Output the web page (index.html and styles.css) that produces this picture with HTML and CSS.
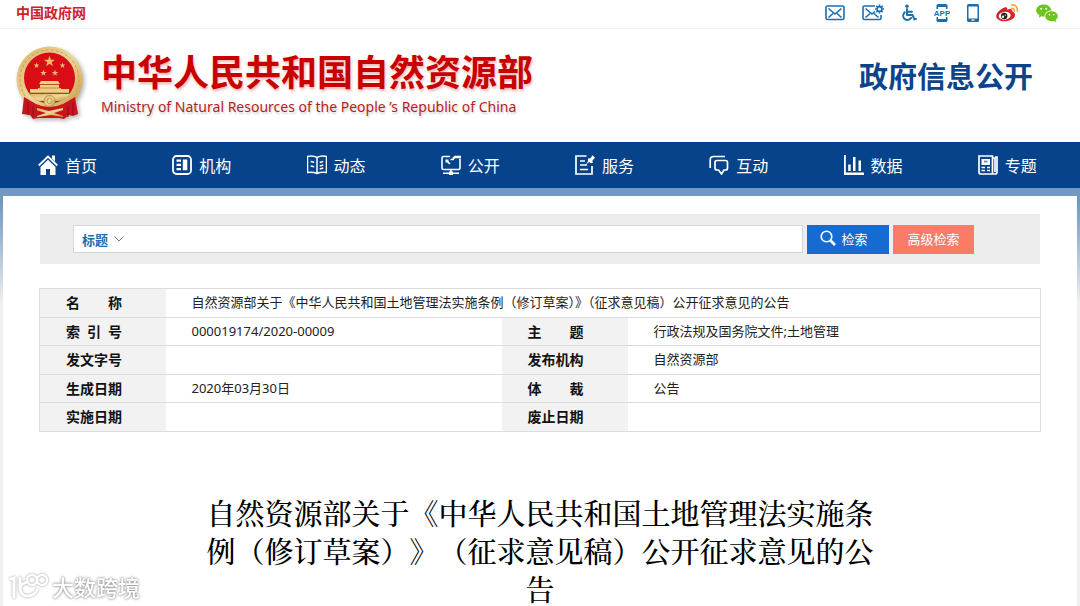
FILE: index.html
```html
<!DOCTYPE html>
<html lang="zh-CN">
<head>
<meta charset="utf-8">
<meta name="viewport" content="width=device-width, initial-scale=1">
<title>自然资源部 政府信息公开</title>
<link rel="stylesheet" href="styles.css">
</head>
<body>
<div class="topbar">
  <a class="gov-link" href="#">中国政府网</a>
  <nav class="tools" aria-label="快捷工具">
    <a class="tool" href="#" aria-label="邮箱"><svg width="20" height="18" viewBox="0 0 20 18" fill="none" stroke="#1b6fae" stroke-width="1.6"><rect x="1" y="2" width="18" height="13.5" rx="1.5"/><path d="M3.5 4.5 10 10l6.500-5.500M3.500 13.500 8 9.500M16.500 13.500 12 9.500"/></svg></a>
    <a class="tool" href="#" aria-label="邮件订阅"><svg width="22" height="18" viewBox="0 0 22 18" fill="none" stroke="#1b6fae" stroke-width="1.600"><path d="M13 2H2.500Q1 2 1 3.500V14q0 1.500 1.500 1.500h15Q19 15.500 19 14v-3"/><path d="M3.500 4.500 10 10l3-2.500M3.500 13.500 8 9.500M16.500 13.500 12 9.500"/><circle cx="17.500" cy="5" r="2.400"/><path d="M17.500.5v1.700M17.500 7.800v1.700M13 5h1.700M20.300 5H22M14.300 1.800l1.200 1.200M19.500 7l1.200 1.200M20.700 1.800 19.500 3M15.500 7l-1.200 1.200"/></svg></a>
    <a class="tool" href="#" aria-label="无障碍浏览"><svg width="16" height="18" viewBox="0 0 16 18" fill="none" stroke="#1b6fae" stroke-width="1.900" stroke-linecap="round" stroke-linejoin="round"><circle cx="6" cy="2.200" r="1.700" fill="#1b6fae" stroke="none"/><path d="M6 5v6h5.500l2 4.500 1.500-.7M6 7.800h5M3.800 8.300a4.300 4.300 0 1 0 6.400 5.500"/></svg></a>
    <a class="tool" href="#" aria-label="APP"><svg width="16" height="18" viewBox="0 0 16 18"><path fill="#1b6fae" d="M4 0h8q1.500 0 1.500 1.500V5h-1.600V3H4.100v2H2.500V1.500Q2.500 0 4 0ZM2.500 13h1.600v2h7.800v-2h1.600v3.500q0 1.500-1.500 1.500H4q-1.500 0-1.500-1.500Z"/><text class="app-text" x="8" y="12" text-anchor="middle">APP</text></svg></a>
    <a class="tool" href="#" aria-label="手机版"><svg width="12" height="18" viewBox="0 0 12 18"><path fill="#1b6fae" fill-rule="evenodd" d="M1.500 0h9Q12 0 12 1.500v15q0 1.500-1.500 1.500h-9Q0 18 0 16.500v-15Q0 0 1.500 0ZM1.500 2.500v12h9v-12ZM4.500 15.500v1.200h3v-1.200Z"/></svg></a>
    <a class="tool" href="#" aria-label="微博"><svg width="23" height="18" viewBox="0 0 23 18"><path fill="#d9222b" d="M8.500 3.500c2-.7 3.200.2 2.700 2.200 3.200-1.300 5.800-.7 5 1.900 5 1.700 3.300 8.300-4.700 9.400C5.300 17.900.2 15.700.2 11.900.2 9 4.700 4.700 8.500 3.500Z"/><ellipse cx="8.700" cy="11.800" rx="6" ry="3.900" fill="#fff" transform="rotate(-7 8.700 11.800)"/><circle cx="8.200" cy="12" r="3.200" fill="#222"/><circle cx="7" cy="12.800" r="1.200" fill="#fff"/><circle cx="9.300" cy="11.200" r=".6" fill="#fff"/><path fill="none" stroke="#f2a23a" stroke-width="1.600" stroke-linecap="round" d="M15.500 1q6-.8 6 6.500M15.500 4.300q3-.2 2.800 2.900"/></svg></a>
    <a class="tool" href="#" aria-label="微信"><svg width="22" height="18" viewBox="0 0 22 18"><path fill="#6cc41f" d="M7.700.5c4.300 0 7.400 2.700 7.700 6-4 0-7 2.500-6.800 6-1.100.1-2 0-3.200-.3L2.700 13.700l.7-2.500C1.200 9.800.2 8.300.2 6.600.2 3.200 3.500.5 7.700.5Z"/><path fill="#6cc41f" d="M15.500 7.300c3.500 0 6.300 2.200 6.300 5 0 1.500-.8 2.800-2.200 3.800l.6 1.900-2.300-1.100c-.8.2-1.500.3-2.400.3-3.500 0-6.200-2.200-6.200-4.900 0-2.800 2.700-5 6.200-5Z"/><g fill="#fff"><circle cx="5.200" cy="4.800" r="1"/><circle cx="10.200" cy="4.800" r="1"/><circle cx="13.500" cy="10.800" r=".8"/><circle cx="17.700" cy="10.800" r=".8"/></g></svg></a>
  </nav>
</div>

<header class="masthead">
  <svg class="emblem" width="68" height="76" viewBox="0 0 68 76" role="img" aria-label="国徽">
    <defs>
      <linearGradient id="gold" x1="0" y1="0" x2="1" y2="1"><stop offset="0" stop-color="#d9b566"/><stop offset=".5" stop-color="#edd698"/><stop offset="1" stop-color="#c8963f"/></linearGradient>
      <polygon id="star" points="0,-10 2.300,-3.100 9.500,-3.100 3.700,1.200 5.900,8.100 0,3.800 -5.900,8.100 -3.700,1.200 -9.500,-3.100 -2.300,-3.100"/>
    </defs>
    <circle cx="33.500" cy="33.500" r="33" fill="url(#gold)"/>
    <circle cx="33.500" cy="33.500" r="29.500" fill="none" stroke="#c9a050" stroke-width="1" stroke-dasharray="3 2"/>
    <path fill="#c8151d" d="M8 51 20 58q13 6 27 0l12-7 3 17-5 2-4-1-5 4-5-1H22l-5 1-3-4-8-1Z"/>
    <circle cx="33.500" cy="32" r="25.500" fill="#d90d16"/>
    <g fill="#e8c06c"><use href="#star" transform="translate(33.500 15.500) scale(.58)"/><use href="#star" transform="translate(20.500 19.500) scale(.3)"/><use href="#star" transform="translate(46.500 19.500) scale(.3)"/><use href="#star" transform="translate(27.500 27) scale(.34)"/><use href="#star" transform="translate(39 27) scale(.34)"/></g>
    <path fill="#edce83" d="M25 35h17l2 3H23ZM24 39h19v3H24ZM22 42h23v4H22ZM14 43h39v4H14Z"/>
    <path stroke="#a4762c" stroke-width=".7" d="M24 38.500h19M23 42h21M14 47h39"/>
    <path fill="url(#gold)" d="M13 48h41q-4 5-10 7H23q-6-2-10-7Z"/>
    <circle cx="33.500" cy="55" r="5.500" fill="url(#gold)" stroke="#b98d3f" stroke-width=".8"/><circle cx="33.500" cy="55" r="2.500" fill="none" stroke="#b98d3f" stroke-width=".8"/>
    <path fill="url(#gold)" d="m21 62 12 3 14-3v9l-12-2-14 2Z"/>
    <path fill="#c8151d" d="m20 64 10 3-9 3ZM47 64l-9 3 9 3Z"/>
    <path stroke="#8f0d14" stroke-width="1" fill="none" d="M12 56v13M17 60v11M52 60v11M57 57v12"/>
  </svg>
  <div class="brand">
    <h1 class="brand-name">中华人民共和国自然资源部</h1>
    <p class="brand-sub">Ministry of Natural Resources of the People ’s Republic of China</p>
  </div>
  <div class="section-name">政府信息公开</div>
</header>

<nav class="mainnav" aria-label="主导航">
  <a class="nav-item" href="#"><svg class="nav-icon" viewBox="0 0 20 20"><path fill="#fff" d="M10 4.800 17.500 12v8H12v-6H8v6H2.500v-8Z"/><path fill="none" stroke="#fff" stroke-width="1.800" d="M.7 10.500 10 1.500l9.300 9"/><path fill="#fff" d="M14 .5h3v6l-3-3Z"/></svg>首页</a>
  <a class="nav-item" href="#"><svg class="nav-icon" viewBox="0 0 20 20"><rect x="1" y="1" width="18" height="18" rx="3.500" fill="none" stroke="#fff" stroke-width="1.800"/><path fill="#fff" d="M4.500 4.500H9v2.300H4.500ZM4.500 8.800H9V11H4.500ZM4.500 13H9v2.300H4.500ZM10.800 4.500h4.500v10.800h-4.500Z"/></svg>机构</a>
  <a class="nav-item" href="#"><svg class="nav-icon" viewBox="0 0 20 20" fill="none" stroke="#fff" stroke-width="1.500"><path d="M10 2.500Q6 .2 .5 1.500v16q5.500-1 9.500 1 4-2 9.500-1v-16q-5.500-1.300-9.500 1Zm0 0v16M3.700 6.500l3.500.8M3.700 11l3.500.8M12.700 7.500l3.500-1M12.700 11l3.500-1M12.700 14l3.500-1"/></svg>动态</a>
  <a class="nav-item" href="#"><svg class="nav-icon" viewBox="0 0 20 20" fill="none" stroke="#fff" stroke-width="1.600"><path d="M9 1.500H2.500Q1 1.500 1 3v10q0 1.500 1.500 1.500h15q1.500 0 1.500-1.500V4.500h-1M10 14.500V18M2 18.200h16"/><path d="M11.500 5V2.500l2-1.700H20v2.400h-6L12.500 5Z" fill="#fff" stroke="none"/><path d="M8 16.500h4V20H8ZM4.500 4.500h3v3h-3Z" fill="#fff" stroke="none"/><path d="m6 6 3 3M9.500 4.500h3"/></svg>公开</a>
  <a class="nav-item" href="#"><svg class="nav-icon" viewBox="0 0 20 20" fill="none" stroke="#fff" stroke-width="1.700"><path d="M11.500 1H1v18h16v-8M5 6h5M5 10h7M5 14.500h8"/><path d="m13 3.500 2.500-.3L17.500.3l2.500 2.500-2.500 2.500.3 2.500-2 .5-1.800-1.300-3.200 3 2.200-4Z" fill="#fff" stroke="none"/></svg>服务</a>
  <a class="nav-item" href="#"><svg class="nav-icon" viewBox="0 0 20 20" fill="none" stroke="#fff" stroke-width="1.700" stroke-linejoin="round"><path d="M1.200 13V5q0-3.500 3.500-3.500H16M8 5.500h8.500q2 0 2 2v5.500q0 2-2 2H15l-2.500 4-3-4H8q-2 0-2-2V7.500q0-2 2-2Z"/></svg>互动</a>
  <a class="nav-item" href="#"><svg class="nav-icon" viewBox="0 0 20 20"><path fill="#fff" d="M0 0h1.800v17.500H20V20H0ZM4.200 9.500h2.500V16H4.200ZM9 2h2.500v14H9ZM14.500 5.500H17V16h-2.500Z"/></svg>数据</a>
  <a class="nav-item" href="#"><svg class="nav-icon" viewBox="0 0 20 20" fill="none" stroke="#fff" stroke-width="1.700"><path d="M1 1h13.500v18H3q-2 0-2-2Zm13.500 2H17v14M14.500 19H17q2 0 2-2V2h-2"/><path d="M3.500 4h8.500v6H3.500Z" fill="#fff" stroke="none"/><path d="M6 6.500h3.500" stroke="#5c83b5"/><path d="M3.500 12.500H7M9 12.500h3M3.500 15.500H7M9 15.500h3" stroke-width="1.400"/></svg>专题</a>
</nav>

<div class="backdrop">
  <main class="page">
    <form class="search">
      <div class="search-box">
        <select class="search-field" aria-label="检索字段"><option>标题</option><option>正文</option></select>
        <svg class="chevron" width="10" height="6" viewBox="0 0 10 6" fill="none" stroke="#777"><path d="m.5.500 4.500 4.500L9.500.500"/></svg>
        <input class="search-input" type="text" aria-label="检索词">
      </div>
      <button class="btn btn-search" type="button"><svg width="16" height="16" viewBox="0 0 16 16" fill="none" stroke="#fff"><circle cx="6.500" cy="6.500" r="5.300" stroke-width="1.600"/><path d="m10.500 10.500 4.500 4.500" stroke-width="2.600"/></svg>检索</button>
      <button class="btn btn-advanced" type="button">高级检索</button>
    </form>

    <table class="meta">
      <colgroup><col class="col-label"><col class="col-mid"><col class="col-label"><col></colgroup>
      <tbody>
        <tr><th scope="row"><span class="spread">名<span>称</span></span></th><td colspan="3">自然资源部关于《中华人民共和国土地管理法实施条例（修订草案）》（征求意见稿）公开征求意见的公告</td></tr>
        <tr><th scope="row"><span class="spread">索<span>引</span><span>号</span></span></th><td>000019174/2020-00009</td><th scope="row"><span class="spread">主<span>题</span></span></th><td>行政法规及国务院文件;土地管理</td></tr>
        <tr><th scope="row">发文字号</th><td></td><th scope="row">发布机构</th><td>自然资源部</td></tr>
        <tr><th scope="row">生成日期</th><td>2020年03月30日</td><th scope="row"><span class="spread">体<span>裁</span></span></th><td>公告</td></tr>
        <tr><th scope="row">实施日期</th><td></td><th scope="row">废止日期</th><td></td></tr>
      </tbody>
    </table>

    <h2 class="doc-title">自然资源部关于《中华人民共和国土地管理法实施条例（修订草案）》（征求意见稿）公开征求意见的公告</h2>
  </main>
</div>

<div class="watermark">
  <svg width="42" height="28" viewBox="0 0 42 28" fill="none" stroke="#fff" stroke-width="3" stroke-linecap="round"><path d="M3 6 6 5v19M12 5v8M20 9q-8 1-8 7M12 15q1 9 9 8 6-1 8-6"/><circle cx="24" cy="7" r="5" stroke-width="2.500"/><circle cx="34" cy="7" r="5" stroke-width="2.500"/></svg>
  <span>大数跨境</span>
</div>
</body>
</html>
```

FILE: styles.css
```css
* {
  box-sizing: border-box;
}

body {
  margin: 0;
  background: #fff;
  color: #222;
  font-family: "Noto Sans", "Noto Sans CJK SC", sans-serif;
  font-size: 13px;
}

a {
  color: inherit;
  text-decoration: none;
}

.topbar {
  display: flex;
  align-items: center;
  justify-content: space-between;
  height: 29px;
  padding: 0 22px 2px 16px;
  border-bottom: 1px solid #f0f0f0;
}

.gov-link {
  color: #d0202e;
  font-size: 14px;
  font-weight: bold;
  line-height: 26px;
}

.tools {
  display: flex;
  align-items: center;
  gap: 17px;
}

.tool {
  display: flex;
}

.app-text {
  fill: #1b6fae;
  font-family: "Liberation Sans", sans-serif;
  font-size: 8px;
  font-weight: bold;
}

.masthead {
  display: flex;
  align-items: center;
  height: 113px;
  padding: 0 47px 4px 16px;
}

.emblem {
  flex: none;
  filter: drop-shadow(2px 2px 2px rgba(0, 0, 0, 0.3));
}

.brand {
  margin-left: 17px;
  padding-top: 4px;
}

.brand-name {
  margin: 0;
  color: #c80000;
  font-size: 36px;
  font-weight: bold;
  line-height: 42px;
  text-shadow: 1px 2px 3px rgba(200, 0, 0, 0.3);
}

.brand-sub {
  margin: 0;
  color: #b81c1c;
  font-family: "Noto Sans", sans-serif;
  font-size: 14px;
  line-height: 26px;
  text-shadow: 1px 2px 2px rgba(0, 0, 0, 0.2);
}

.section-name {
  margin-left: auto;
  padding-bottom: 18px;
  color: #0c448c;
  font-size: 29px;
  font-weight: bold;
}

.mainnav {
  display: grid;
  grid-template-columns: repeat(8, 1fr);
  height: 46px;
  padding: 0 3px;
  background: #07438a;
}

.nav-item {
  display: flex;
  align-items: center;
  gap: 7px;
  padding-left: 35px;
  color: #fff;
  font-size: 16px;
}

.nav-icon {
  width: 20px;
  height: 20px;
}

.backdrop {
  padding: 8px 3px 0;
  background: #f0f0f0 linear-gradient(#7299c1, #7299c1 16px, #f0f0f0) 0 0 / 100% 116px no-repeat;
}

.page {
  padding: 18px 36px 0;
  background: #fff;
}

.search {
  display: flex;
  align-items: center;
  gap: 4px;
  height: 50px;
  margin: 0 1px;
  padding: 0 66px 0 33px;
  background: #ededed;
}

.search-box {
  display: flex;
  flex: 1;
  align-items: center;
  height: 28px;
  border: 1px solid #d5d5d5;
  background: #fff;
}

.search-field {
  padding: 0 5px 0 8px;
  border: 0;
  background: none;
  color: #1b6fae;
  font: bold 13px "Noto Sans CJK SC", sans-serif;
  appearance: none;
}

.search-input {
  flex: 1;
  height: 24px;
  border: 0;
  padding: 0 8px;
}

.btn {
  display: flex;
  align-items: center;
  justify-content: center;
  gap: 5px;
  height: 29px;
  padding: 0 0 2px;
  border: 0;
  color: #fff;
  font: 13px "Noto Sans CJK SC", sans-serif;
}

.btn-search {
  width: 82px;
  padding-right: 8px;
  background: #166bd3;
}

.btn-advanced {
  width: 81px;
  background: #fb7b69;
}

.meta {
  width: 100%;
  margin-top: 24px;
  border: 1px solid #dcdcdc;
  border-collapse: collapse;
  table-layout: fixed;
}

.col-label {
  width: 126px;
}

.col-mid {
  width: 336px;
}

.meta tr {
  height: 29px;
  border-bottom: 1px solid #dcdcdc;
}

.meta tr:nth-child(even) {
  height: 28px;
}

.meta th,
.meta td {
  padding: 0 0 0 26px;
  line-height: 20px;
  text-align: left;
}

.meta td {
  padding-bottom: 2px;
}

.meta th {
  background: #f2f2f2;
  color: #111;
  font-size: 14px;
}

.spread {
  display: flex;
  justify-content: space-between;
  width: 56px;
}

.doc-title {
  max-width: 670px;
  margin: 0 auto;
  padding-top: 62px;
  color: #000;
  font-family: "Noto Serif CJK SC", "Noto Serif SC", "Liberation Serif", serif;
  font-size: 29px;
  font-weight: 500;
  line-height: 38px;
  text-align: center;
  text-spacing-trim: space-all;
}

.watermark {
  position: fixed;
  bottom: 4px;
  left: 8px;
  display: flex;
  align-items: center;
  gap: 2px;
  color: #fff;
  font-size: 22px;
  font-weight: 500;
  line-height: 30px;
  text-shadow: 0 0 3px #888, 0 0 2px #aaa;
}

.watermark svg {
  filter: drop-shadow(0 0 1px #999);
}
```
